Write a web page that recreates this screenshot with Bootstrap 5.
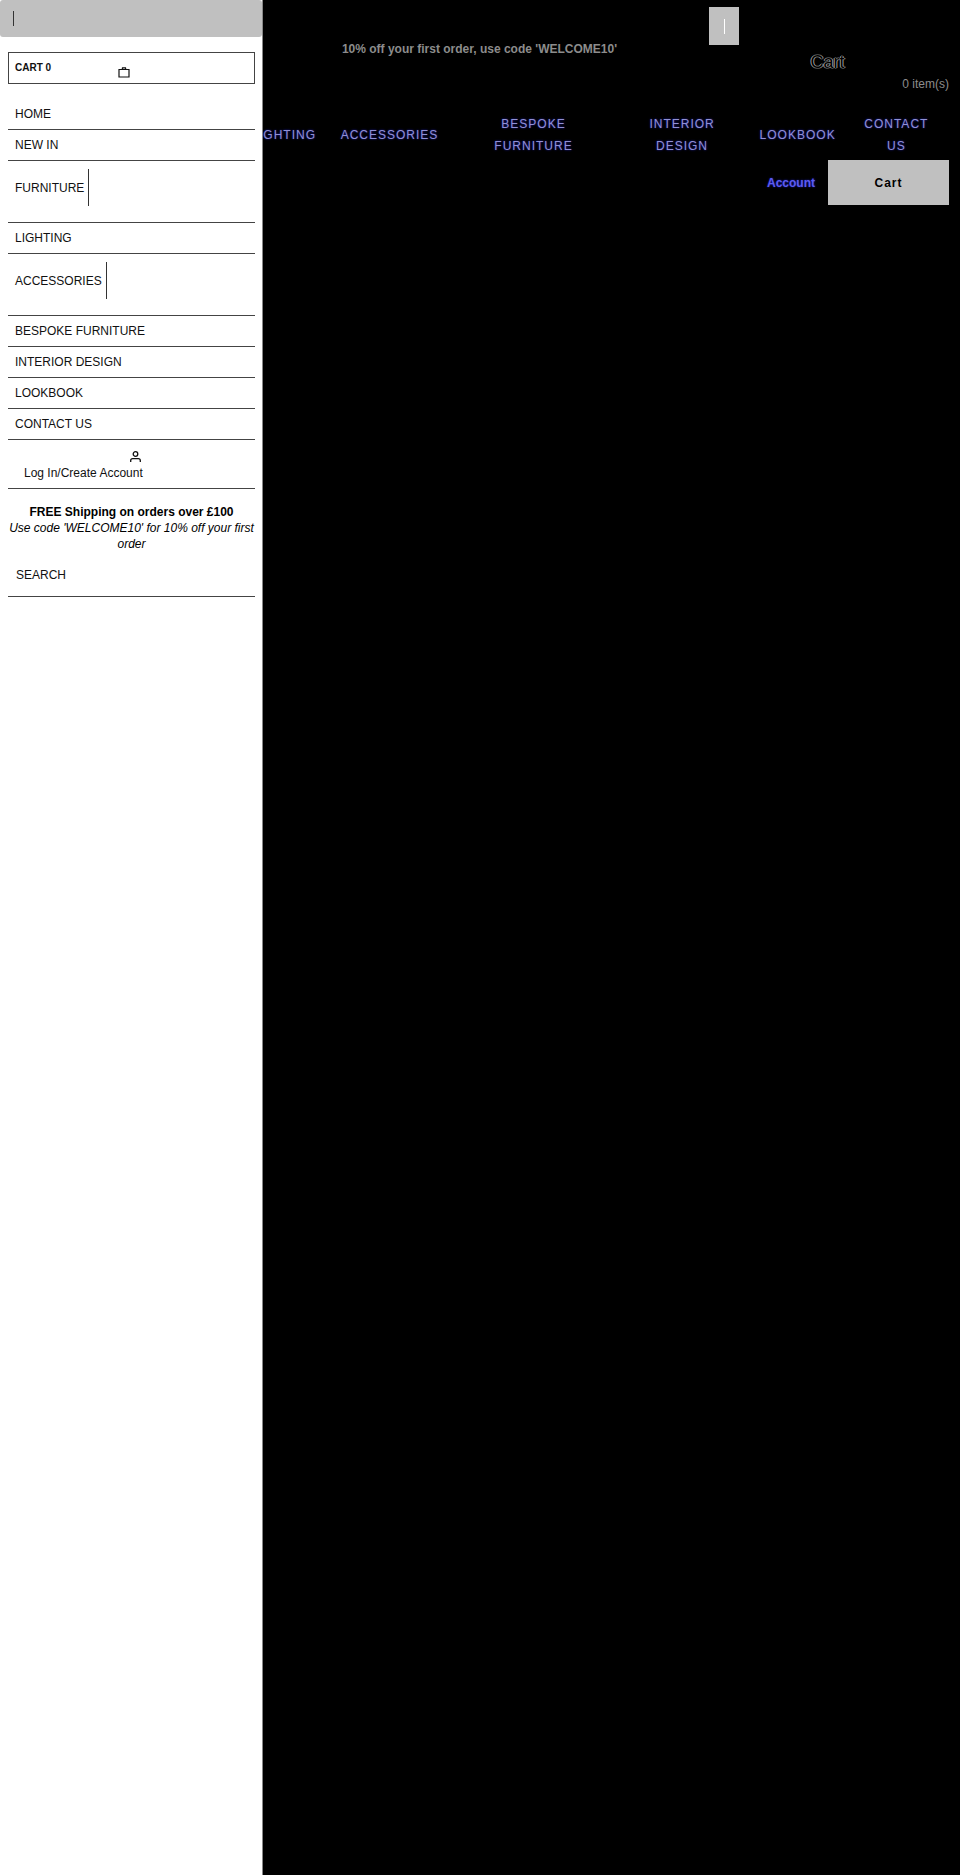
<!DOCTYPE html>
<html lang="en">
<head>
<meta charset="utf-8">
<meta name="viewport" content="width=device-width, initial-scale=1">
<title>Cart</title>
<link rel="stylesheet" href="https://cdn.jsdelivr.net/npm/bootstrap@5.3.0/dist/css/bootstrap.min.css">
<style>
  body { background: #000; color: #000; font: 12px/16px "Liberation Sans", Arial, sans-serif; }
  .drawer { width: 263px; background: #fff; border-right: 1px solid #888; z-index: 10; }
  .drawer-close { height: 37px; background: #c0c0c0; padding: 0 13px; border-radius: 3px; }
  .tick { width: 1px; height: 15px; background: #333; }
  .drawer-body { padding: 15px 7px 0 8px; }
  .drawer-cart { height: 32px; border: 1px solid #444; padding: 0 6px; font-size: 10px; font-weight: 700; margin-bottom: 15px; }
  .drawer-cart svg { margin: 8px 0 0 67px; }
  .drawer a { color: #111; text-decoration: none; }
  .drawer-list > li { border-bottom: 1px solid #444; padding: 7px 7px; }
  .drawer-list > .has-sub { padding: 8px 7px 16px; }
  .sub-toggle { width: 1px; height: 37px; background: #333; margin-left: 4px; }
  .drawer-list > .log-in { padding: 11px 16px 7px; }
  .log-in svg { margin: 0 0 3px 106px; }
  .promo { padding: 15px 0 11px; }
  .drawer-search { border-bottom: 1px solid #444; }
  .drawer-search input { height: 33px; padding: 0 8px 9px; font-size: 12px; color: #111; }
  .drawer-search input::placeholder { color: #111; opacity: 1; }
  .page-head { padding: 7px 11px 0; }
  .faint { color: #8c8c8c; }
  .code-note { padding: 34px 89px 0 0; font-weight: 700; }
  .head-side { width: 243px; }
  .search-btn { width: 30px; height: 38px; background: #c0c0c0; margin-left: 3px; }
  .search-btn .tick { background: #fff; }
  .head-side h1 { font-size: 18px; line-height: 20px; margin: 7px 0 4px; color: #000; text-shadow: 1px 0 #999, -1px 0 #999, 0 1px #444, 0 -1px #444; }
  .main-links { display: grid; grid-template-columns: 90fr 123fr 167fr 132fr 97fr 98fr; margin: 21px 4px 3px 228px; }
  .main-links a { padding: 0 12px; letter-spacing: 1px; line-height: 22px; color: #9090d4; text-shadow: 0 0 2px #2020c0; text-decoration: none; }
  .account-link { color: #5c5cf0; font-weight: 700; text-shadow: 0 0 2px #2020c0; text-decoration: none; margin-right: 13px; }
  .cart-btn { width: 121px; height: 45px; background: #c0c0c0; font-weight: 700; letter-spacing: 1px; }
</style>
</head>
<body class="position-relative min-vh-100">
<aside class="drawer position-absolute top-0 start-0 h-100">
  <button class="drawer-close border-0 w-100 d-flex align-items-center" aria-label="Close menu"><span class="tick"></span></button>
  <div class="drawer-body">
    <a href="#" class="drawer-cart d-flex align-items-center">CART 0
      <svg width="12" height="12" viewBox="0 0 12 12" fill="none" stroke="#111"><path d="M1 3.5h10v7.5H1zM4.2 3.5l.3-1.6h3l.3 1.6" stroke-width="1.2"/></svg>
    </a>
    <ul class="drawer-list list-unstyled mb-0">
      <li><a href="#">HOME</a></li>
      <li><a href="#">NEW IN</a></li>
      <li class="has-sub d-flex align-items-center"><a href="#">FURNITURE</a><span class="sub-toggle"></span></li>
      <li><a href="#">LIGHTING</a></li>
      <li class="has-sub d-flex align-items-center"><a href="#">ACCESSORIES</a><span class="sub-toggle"></span></li>
      <li><a href="#">BESPOKE FURNITURE</a></li>
      <li><a href="#">INTERIOR DESIGN</a></li>
      <li><a href="#">LOOKBOOK</a></li>
      <li><a href="#">CONTACT US</a></li>
      <li class="log-in"><a href="#" class="d-block">
        <svg class="d-block" width="11" height="11" viewBox="0 0 11 11" fill="none" stroke="#111" stroke-width="1.3"><circle cx="5.5" cy="3" r="2.3"/><path d="M.7 11V9.6Q.7 7.6 2.7 7.6h5.6q2 0 2 2V11"/></svg>
        Log In/Create Account</a></li>
    </ul>
    <div class="promo text-center"><strong>FREE Shipping on orders over £100</strong><br><em>Use code 'WELCOME10' for 10% off your first order</em></div>
    <form class="drawer-search"><input class="border-0 w-100 bg-transparent d-block" type="search" placeholder="SEARCH" aria-label="Search"></form>
  </div>
</aside>

<header class="page-head">
  <div class="d-flex justify-content-end">
    <div class="code-note faint">10% off your first order, use code 'WELCOME10'</div>
    <div class="head-side">
      <button class="search-btn border-0 p-0 d-flex align-items-center justify-content-center" aria-label="Search"><span class="tick"></span></button>
      <h1 class="text-center fw-normal">Cart</h1>
      <div class="faint text-end">0 item(s)</div>
    </div>
  </div>
  <nav class="main-links text-center align-items-center">
    <a href="#">LIGHTING</a><a href="#">ACCESSORIES</a><a href="#">BESPOKE FURNITURE</a><a href="#">INTERIOR DESIGN</a><a href="#">LOOKBOOK</a><a href="#">CONTACT US</a>
  </nav>
  <div class="d-flex justify-content-end align-items-center">
    <a href="#" class="account-link">Account</a>
    <button class="cart-btn border-0">Cart</button>
  </div>
</header>
<script src="https://cdn.jsdelivr.net/npm/bootstrap@5.3.0/dist/js/bootstrap.bundle.min.js"></script>
</body>
</html>
